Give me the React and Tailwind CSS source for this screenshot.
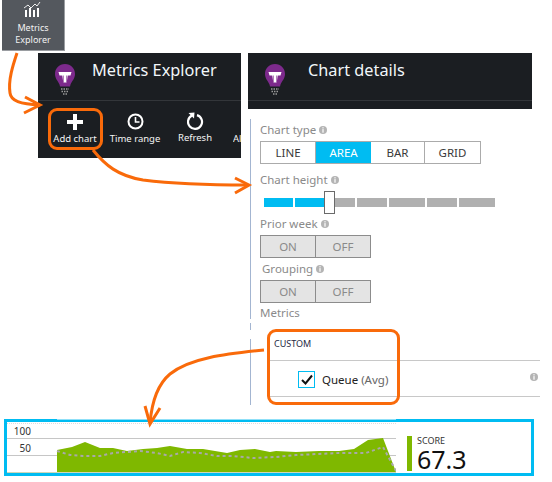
const FONT = { fontFamily: '"Noto Sans", sans-serif' };

function Bulb() {
  return (
    <svg width="22" height="40" viewBox="0 0 22 40">
      <path d="M11 1C5 1 1 5.500 1 11c0 4.500 3 7 4.500 10.500l.5 2h10l.5-2C18 18 21 15.500 21 11 21 5.500 17 1 11 1z" fill="#7d2a8c" />
      <path d="M4.500 9h13l-1 3.500h-2.800l-1 7h-3.400l-1-7H5.500z" fill="#fff" />
      <path d="M9.500 12.500v7M12.500 12.500v7" stroke="#7d2a8c" strokeWidth="0.600" />
      <path d="M7 26h8M7.500 28.500h7M9 31h4" stroke="#9a9a9a" strokeWidth="1.600" strokeDasharray="1.500 1" />
    </svg>
  );
}

function Info() {
  return (
    <svg width="8" height="8" viewBox="0 0 8 8" className="shrink-0">
      <circle cx="4" cy="4" r="4" fill="#b4b4b4" />
      <rect x="3.400" y="1.200" width="1.200" height="1.200" fill="#fff" />
      <rect x="3.400" y="3.100" width="1.200" height="3.600" fill="#fff" />
    </svg>
  );
}

function Label({ children, info = true, className = "" }) {
  return (
    <div className={`flex items-center gap-[3px] text-[11.500px] text-[#8a8a8a] leading-none ${className}`}>
      <span>{children}</span>
      {info && <Info />}
    </div>
  );
}

function Toggle() {
  return (
    <div className="flex w-[111px] h-[23px] border border-[#8c8c8c] bg-[#e4e4e4] text-[11.500px] text-[#8a8a8a]">
      <div className="w-[55px] flex items-center justify-center border-r border-[#8c8c8c]">ON</div>
      <div className="flex-1 flex items-center justify-center">OFF</div>
    </div>
  );
}

function Header({ title, width, height, children, titleClass }) {
  return (
    <div className={`bg-[#1b1e22] text-white ${width} ${height}`}>
      <div className="relative h-[48px] border-b border-[#33363a]">
        <div className="absolute left-[16px] top-[10px]"><Bulb /></div>
        <div className={`absolute top-[4px] text-[16.300px] leading-[26px] text-[#f2f7fa] ${titleClass}`}>{title}</div>
      </div>
      {children}
    </div>
  );
}

function ToolButton({ icon, label, className }) {
  return (
    <div className={`flex flex-col items-center ${className}`}>
      <div className="h-[21px] flex items-center justify-center">{icon}</div>
      <div className="text-[9.500px] leading-[14px] whitespace-nowrap">{label}</div>
    </div>
  );
}

export default function App() {
  return (
    <div className="relative w-[552px] h-[482px] bg-white overflow-hidden" style={FONT}>
      {/* Tile */}
      <div className="ml-[2px] w-[63px] h-[51px] bg-[#54585e] border-r border-b border-[#9a9da1] flex flex-col items-center text-white">
        <svg width="18" height="17" viewBox="0 0 18 17" className="mt-[1px] -ml-[2px]">
          <path d="M1 7l4-3 3 3 4-4 2 2 3-4" fill="none" stroke="#fff" strokeWidth="0.900" />
          <path d="M2 9h2v7H2zM6 7h2v9H6zM10 9h2v7h-2zM14 7h2v9h-2z" fill="#fff" />
        </svg>
        <div className="text-[9px] leading-[12px] text-center mt-[4px] text-[#f2f2f2]">Metrics<br />Explorer</div>
      </div>

      <div className="flex ml-[38px] mt-[2px] gap-[7px]">
        {/* Metrics Explorer */}
        <Header title="Metrics Explorer" width="w-[203px]" height="h-[105px]" titleClass="left-[54px]">
          <div className="relative h-[56px] overflow-hidden text-[#f5f5f5]">
            <ToolButton
              className="absolute left-[16px] top-[10px] w-[42px]"
              label="Add chart"
              icon={<svg width="16" height="16" viewBox="0 0 16 16"><path d="M6 0h4v6h6v4h-6v6H6v-6H0V6h6z" fill="#fff" /></svg>}
            />
            <ToolButton
              className="absolute left-[72px] top-[10px] w-[50px]"
              label="Time range"
              icon={<svg width="17" height="17" viewBox="0 0 17 17" fill="none" stroke="#fff" strokeWidth="2"><circle cx="8.500" cy="8.500" r="7" /><path d="M8.500 4v5h4" strokeWidth="1.600" /></svg>}
            />
            <ToolButton
              className="absolute left-[141px] top-[9px] w-[32px]"
              label="Refresh"
              icon={<svg width="17" height="18" viewBox="0 0 17 18" fill="none"><path d="M5 3.500a7 7 0 1 0 5 -.4" stroke="#fff" strokeWidth="2.200" /><path d="M1.500 1l6 -.5-.5 6z" fill="#fff" /></svg>}
            />
            <div className="absolute left-[195px] top-[31px] text-[9.500px] leading-[14px] w-[8px] overflow-hidden">Al</div>
          </div>
        </Header>

        {/* Chart details column */}
        <div className="w-[304px]">
          <Header title="Chart details" width="w-[284px]" height="h-[56px]" titleClass="left-[60px]" />

          <div className="flex mt-[10px] ml-[2px] mr-[12px]">
            <div className="flex flex-col w-[1px] shrink-0">
              <div className="h-[200px] bg-[#a3b5d1]" />
              <div className="h-[7px] mt-[4px] bg-[#a3b5d1]" />
              <div className="h-[66px] mt-[9px] bg-[#a3b5d1]" />
            </div>
            <div className="pl-[9px] flex-1">
              <Label className="h-[22px]">Chart type</Label>
              <div className="flex w-[221px] h-[23px] border border-[#ababab] text-[11.500px] text-[#3a3a3a]">
                <div className="w-[55px] flex items-center justify-center border-r border-[#ababab]">LINE</div>
                <div className="w-[55px] flex items-center justify-center bg-[#00bcf2] text-white">AREA</div>
                <div className="w-[54px] flex items-center justify-center border-r border-[#ababab]">BAR</div>
                <div className="flex-1 flex items-center justify-center">GRID</div>
              </div>
              <Label className="h-[22px] mt-[5px]">Chart height</Label>
              <div className="relative h-[23px] pl-[4px] flex items-center">
                <div className="flex h-[9px] gap-[2px]">
                  <div className="w-[29px] bg-[#00bcf2]" />
                  <div className="w-[31px] bg-[#00bcf2]" />
                  <div className="w-[27px] bg-[#b0b0b0]" />
                  <div className="w-[30px] bg-[#b0b0b0]" />
                  <div className="w-[36px] bg-[#b0b0b0]" />
                  <div className="w-[30px] bg-[#b0b0b0]" />
                  <div className="w-[36px] bg-[#b0b0b0]" />
                </div>
                <div className="absolute left-[64px] top-0 w-[11px] h-[23px] bg-white border border-[#6a6a6a]" />
              </div>
              <Label className="h-[21px] pb-[2px]">Prior week</Label>
              <Toggle />
              <Label className="h-[22px] pl-[2px]">Grouping</Label>
              <Toggle />
              <Label info={false} className="h-[21px] pb-[2px]">Metrics</Label>

              <div className="mt-[13px] pl-[14px] text-[9px] leading-[13px] text-[#1f2a44] h-[23px] flex items-start">CUSTOM</div>
              <div className="ml-[9px] border-y border-[#c8c8c8] h-[37px] flex items-center pl-[29px] pr-[2px]">
                <div className="w-[17px] h-[17px] mt-[2px] border border-[#00bcf2] flex items-center justify-center">
                  <svg width="12" height="11" viewBox="0 0 12 11"><path d="M1 6l3.500 3.500L11 1.500" fill="none" stroke="#111" strokeWidth="2" /></svg>
                </div>
                <div className="ml-[7px] mt-[2px] text-[11.500px] text-[#222]">Queue <span className="text-[#666]">(Avg)</span></div>
                <div className="ml-auto -mt-[3px]"><Info /></div>
              </div>
            </div>
          </div>
        </div>
      </div>

      {/* Score chart */}
      <div className="ml-[4px] mt-[14px] w-[530px] h-[57px] border-[3px] border-[#00bcf2] flex">
        <svg width="389" height="51" viewBox="7 423 389 51" className="shrink-0">
          <line x1="7" x2="396" y1="424.500" y2="424.500" stroke="#dcdcdc" strokeDasharray="1 1" />
          <line x1="7" x2="396" y1="439.500" y2="439.500" stroke="#c6c6c6" />
          <line x1="7" x2="396" y1="456.500" y2="456.500" stroke="#c6c6c6" />
          <line x1="7" x2="396" y1="473.500" y2="473.500" stroke="#cfd8b8" />
          <polygon
            fill="#7fb800"
            points="57,451 72,448 85,443 100,449 113,449 127,452 143,450 157,449 170,447 187,450 203,450 227,454 240,451 255,450 270,453 276,452 296,453 319,452 339,452 354,450 368,441 383,439 396,473 57,473"
          />
          <polyline
            fill="none"
            stroke="#a9a9a9"
            strokeWidth="2"
            strokeDasharray="3 3"
            points="57,452 70,456 83,457 100,457 113,454 140,452 157,454 170,457 183,453 200,454 217,457 233,457 253,459 276,458 296,456 339,454 366,454 383,448 396,472"
          />
          <text x="31" y="436" textAnchor="end" fontSize="10" fill="#333" style={FONT}>100</text>
          <text x="31" y="453" textAnchor="end" fontSize="10" fill="#333" style={FONT}>50</text>
        </svg>
        <div className="ml-[11px] mt-[14px] w-[5px] h-[35px] bg-[#7fb800]" />
        <div className="ml-[5px] mt-[13px] text-[#1a1a1a]">
          <div className="text-[9px] leading-[12px] text-[#333]">SCORE</div>
          <div className="text-[25px] leading-[24px] font-normal text-[#111]">67.3</div>
        </div>
      </div>

      {/* Annotations */}
      <div className="absolute left-[57px] top-[419px] w-[339px] h-px bg-[#8fe0f8]" />
      <div className="absolute left-[48px] top-[108px] w-[55px] h-[42px] rounded-[9px] border-[3px] border-[#f96a0a]" />
      <div className="absolute left-[267px] top-[329px] w-[133px] h-[76px] rounded-[9px] border-[3px] border-[#f96a0a]" />
      <svg width="552" height="482" viewBox="0 0 552 482" className="absolute inset-0 pointer-events-none" fill="none" stroke="#f96a0a" strokeWidth="3">
        <path d="M17 53C13 65 8 80 10 93C11 101 20 104 40 105" />
        <path d="M25 97L40 105L24 113" />
        <path d="M93 150C105 165 118 176 143 180C175 184 205 185 248 185" />
        <path d="M235 178L249 185L235 193" />
        <path d="M264 350C225 354 190 358 170 374C158 384 152 400 150 423" />
        <path d="M145 406L150 424L160 408" />
      </svg>
    </div>
  );
}
